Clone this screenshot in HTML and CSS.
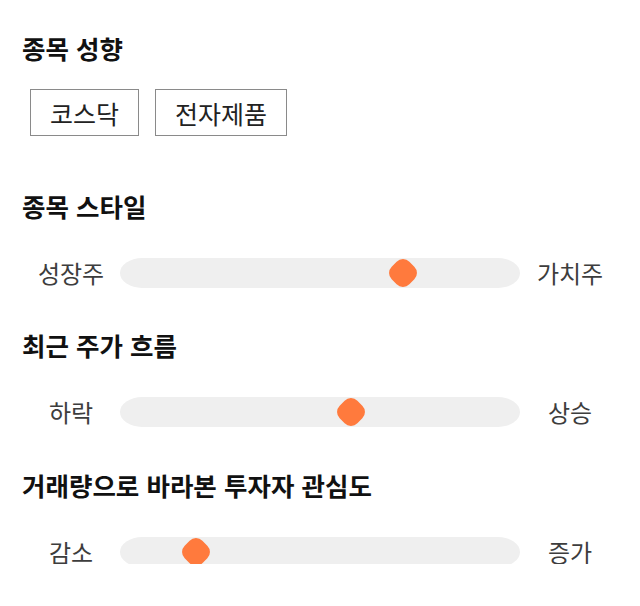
FILE: index.html
```html
<!DOCTYPE html>
<html lang="ko">
<head>
<meta charset="utf-8">
<link rel="stylesheet" href="styles.css">
</head>
<body>
<div class="page">
  <section class="group">
    <h2 class="title">종목 성향</h2>
    <div class="tags">
      <span class="tag">코스닥</span>
      <span class="tag">전자제품</span>
    </div>
  </section>
  <section class="group">
    <h2 class="title">종목 스타일</h2>
    <div class="slider-row">
      <span class="label">성장주</span>
      <div class="track"><span class="thumb" style="left:70.75%"></span></div>
      <span class="label">가치주</span>
    </div>
  </section>
  <section class="group">
    <h2 class="title">최근 주가 흐름</h2>
    <div class="slider-row">
      <span class="label">하락</span>
      <div class="track"><span class="thumb" style="left:57.75%"></span></div>
      <span class="label">상승</span>
    </div>
  </section>
  <section class="group">
    <h2 class="title">거래량으로 바라본 투자자 관심도</h2>
    <div class="slider-row">
      <span class="label">감소</span>
      <div class="track"><span class="thumb" style="left:19%"></span></div>
      <span class="label">증가</span>
    </div>
  </section>
</div>
</body>
</html>
```

FILE: styles.css
```css
html, body {
  margin: 0;
  padding: 0;
  background: #ffffff;
}
body {
  font-family: "Noto Sans CJK KR", "Noto Sans", sans-serif;
  color: #111;
}
.page {
  padding: 32px 20px 0 22px;
  display: flex;
  flex-direction: column;
}
.group {
  display: flex;
  flex-direction: column;
}
.title {
  margin: 0;
  font-size: 25.5px;
  font-weight: 700;
  line-height: 32px;
  color: #111;
}
.tags {
  display: flex;
  gap: 16px;
  margin: 25px 0 0 8px;
}
.tag {
  display: flex;
  align-items: center;
  justify-content: center;
  height: 45px;
  padding: 0 19px;
  border: 1px solid #8a8a8a;
  font-size: 25px;
  color: #222;
}
.group:nth-child(2) { margin-top: 54px; }
.group:nth-child(3) { margin-top: 44px; }
.group:nth-child(4) { margin-top: 45px; }
.slider-row {
  display: grid;
  grid-template-columns: 98px 400px 100px;
  align-items: center;
  margin-top: 33px;
  height: 30px;
}
.label {
  text-align: center;
  font-size: 24px;
  color: #3d3d3d;
}
.track {
  position: relative;
  height: 30px;
  background: #efefef;
  border-radius: 22px / 15px;
}
.thumb {
  position: absolute;
  top: 50%;
  width: 25px;
  height: 25px;
  background: #ff7a3d;
  border-radius: 9px;
  transform: translate(-50%, -50%) rotate(45deg);
}
```
